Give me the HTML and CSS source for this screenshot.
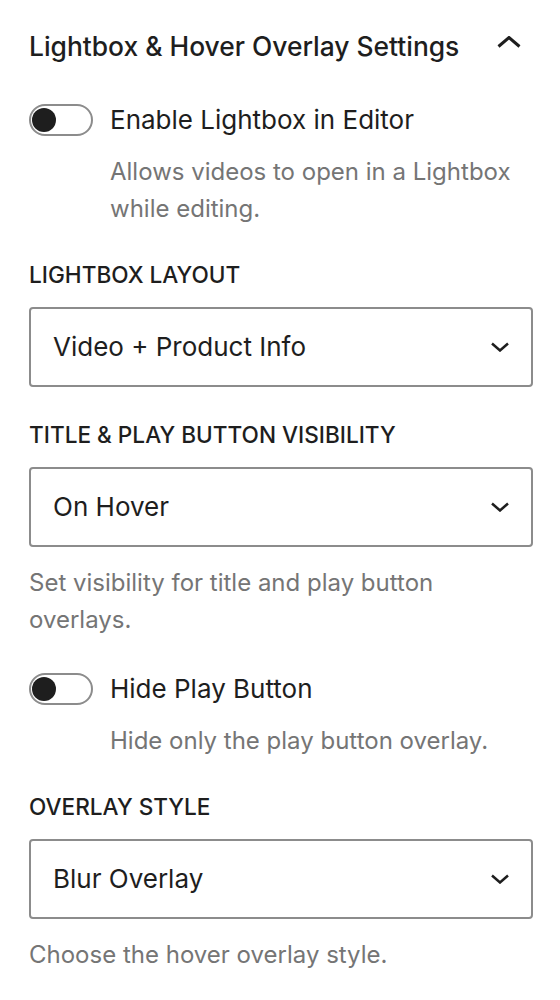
FILE: index.html
```html
<!DOCTYPE html>
<html lang="en">
<head>
<meta charset="utf-8">
<title>Lightbox &amp; Hover Overlay Settings</title>
<link rel="stylesheet" href="styles.css">
</head>
<body>
<div class="panel">
  <div class="panel-header">
    <h2 class="panel-title">Lightbox &amp; Hover Overlay Settings</h2>
    <span class="panel-toggle">
      <svg width="24" height="12" viewBox="0 0 24 12"><polyline points="1.5,10.5 12,1.5 22.5,10.5" fill="none" stroke="#1e1e1e" stroke-width="3"/></svg>
    </span>
  </div>
  <div class="panel-body">
    <div class="control">
      <div class="toggle-row">
        <span class="toggle"><span class="knob"></span></span>
        <span class="toggle-label">Enable Lightbox in Editor</span>
      </div>
      <p class="help indent">Allows videos to open in a Lightbox while editing.</p>
    </div>

    <div class="field">
      <div class="field-label">Lightbox Layout</div>
      <div class="select">
        <span class="select-value">Video + Product Info</span>
        <svg class="caret" width="18" height="10" viewBox="0 0 18 10"><polyline points="1,1.5 9,8.5 17,1.5" fill="none" stroke="#1e1e1e" stroke-width="2.5"/></svg>
      </div>
    </div>

    <div class="field">
      <div class="field-label">Title &amp; Play Button Visibility</div>
      <div class="select">
        <span class="select-value">On Hover</span>
        <svg class="caret" width="18" height="10" viewBox="0 0 18 10"><polyline points="1,1.5 9,8.5 17,1.5" fill="none" stroke="#1e1e1e" stroke-width="2.5"/></svg>
      </div>
      <p class="help">Set visibility for title and play button overlays.</p>
    </div>

    <div class="control">
      <div class="toggle-row">
        <span class="toggle"><span class="knob"></span></span>
        <span class="toggle-label">Hide Play Button</span>
      </div>
      <p class="help indent">Hide only the play button overlay.</p>
    </div>

    <div class="field">
      <div class="field-label">Overlay Style</div>
      <div class="select">
        <span class="select-value">Blur Overlay</span>
        <svg class="caret" width="18" height="10" viewBox="0 0 18 10"><polyline points="1,1.5 9,8.5 17,1.5" fill="none" stroke="#1e1e1e" stroke-width="2.5"/></svg>
      </div>
      <p class="help">Choose the hover overlay style.</p>
    </div>
  </div>
</div>
</body>
</html>
```

FILE: styles.css
```css
* { box-sizing: border-box; }

body {
  margin: 0;
  background: #ffffff;
  color: #1e1e1e;
  font-family: Inter, "Noto Sans", "Liberation Sans", sans-serif;
}

.panel {
  padding: 0 27px 0 29px;
}

.panel-header {
  height: 92px;
  display: flex;
  align-items: center;
  justify-content: space-between;
}

.panel-title {
  margin: 0;
  font-size: 26.4px;
  font-weight: 500;
  line-height: 36px;
}

.panel-toggle {
  display: flex;
  align-items: center;
  margin-right: 12px;
  margin-bottom: 8px;
}

.panel-body {
  display: flex;
  flex-direction: column;
  gap: 33px;
  padding-top: 10px;
}

.toggle-row {
  display: flex;
  align-items: center;
  height: 36px;
  gap: 17px;
}

.toggle {
  width: 64px;
  height: 32px;
  border: 2px solid #8c8c8c;
  border-radius: 16px;
  display: flex;
  align-items: center;
  padding: 0 1px;
}

.knob {
  width: 24px;
  height: 24px;
  border-radius: 50%;
  background: #1e1e1e;
}

.toggle-label {
  font-size: 26px;
  line-height: 36px;
}

.help {
  margin: 15px 0 0;
  font-size: 24px;
  line-height: 37px;
  color: #757575;
}

.help.indent {
  margin-left: 81px;
}

.field-label {
  font-size: 22.6px;
  font-weight: 500;
  line-height: 30px;
  text-transform: uppercase;
}

.select {
  margin-top: 17px;
  height: 80px;
  border: 2px solid #8c8c8c;
  border-radius: 4px;
  display: flex;
  align-items: center;
  justify-content: space-between;
  padding: 0 22px 0 22px;
}

.select-value {
  font-size: 26px;
  line-height: 36px;
}

.field .help {
  margin-top: 17px;
}
```
